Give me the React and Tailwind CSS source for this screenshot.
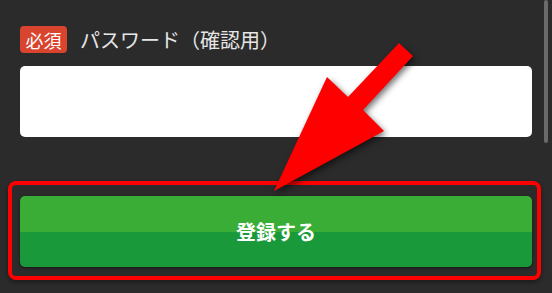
export default function App() {
  return (
    <div className="relative w-[552px] h-[293px] overflow-hidden bg-[#2b2b2b] font-['Noto_Sans_CJK_JP',sans-serif]">
      {/* form field */}
      <div className="w-[532px] pl-5 pt-[26px]">
        <div className="flex items-center gap-[13px]">
          <span className="flex h-[27px] w-[47px] items-center justify-center rounded-[4px] bg-[#d8442e] text-[18px] leading-none text-white">
            必須
          </span>
          <span className="text-[20px] leading-none text-[#e6e6e6]">パスワード（確認用）</span>
        </div>
        <div className="mt-[13px] h-[71px] w-[512px] rounded-[5px] bg-white" />
      </div>

      {/* highlighted submit button */}
      <div className="ml-2 mt-[44px] w-[533px] rounded-[8px] border-4 border-[#ff0000] pb-[9px] pl-2 pr-[5px] pt-[11px] shadow-[0_2px_4px_rgba(0,0,0,0.4)]">
        <button className="flex h-[71px] w-[512px] items-center justify-center overflow-hidden rounded-[5px] bg-[linear-gradient(#3aad37_0%,#3aad37_50%,#1a993a_50%,#1a993a_100%)] text-[20px] font-bold text-white shadow-[0_1px_3px_rgba(0,0,0,0.5)]">
          登録する
        </button>
      </div>

      {/* scrollbar */}
      <div className="absolute right-[4px] top-0 h-[143px] w-[4px] rounded-full bg-[#6a6a6a]" />

      {/* arrow annotation */}
      <svg
        className="pointer-events-none absolute left-0 top-0 drop-shadow-[2px_3px_3px_rgba(0,0,0,0.55)]"
        width="552"
        height="293"
        viewBox="0 0 552 293"
      >
        <polygon
          points="399,43 413,56 363,110 384,131 274,191 327,77 348,97"
          fill="#ff0000"
        />
      </svg>
    </div>
  );
}
